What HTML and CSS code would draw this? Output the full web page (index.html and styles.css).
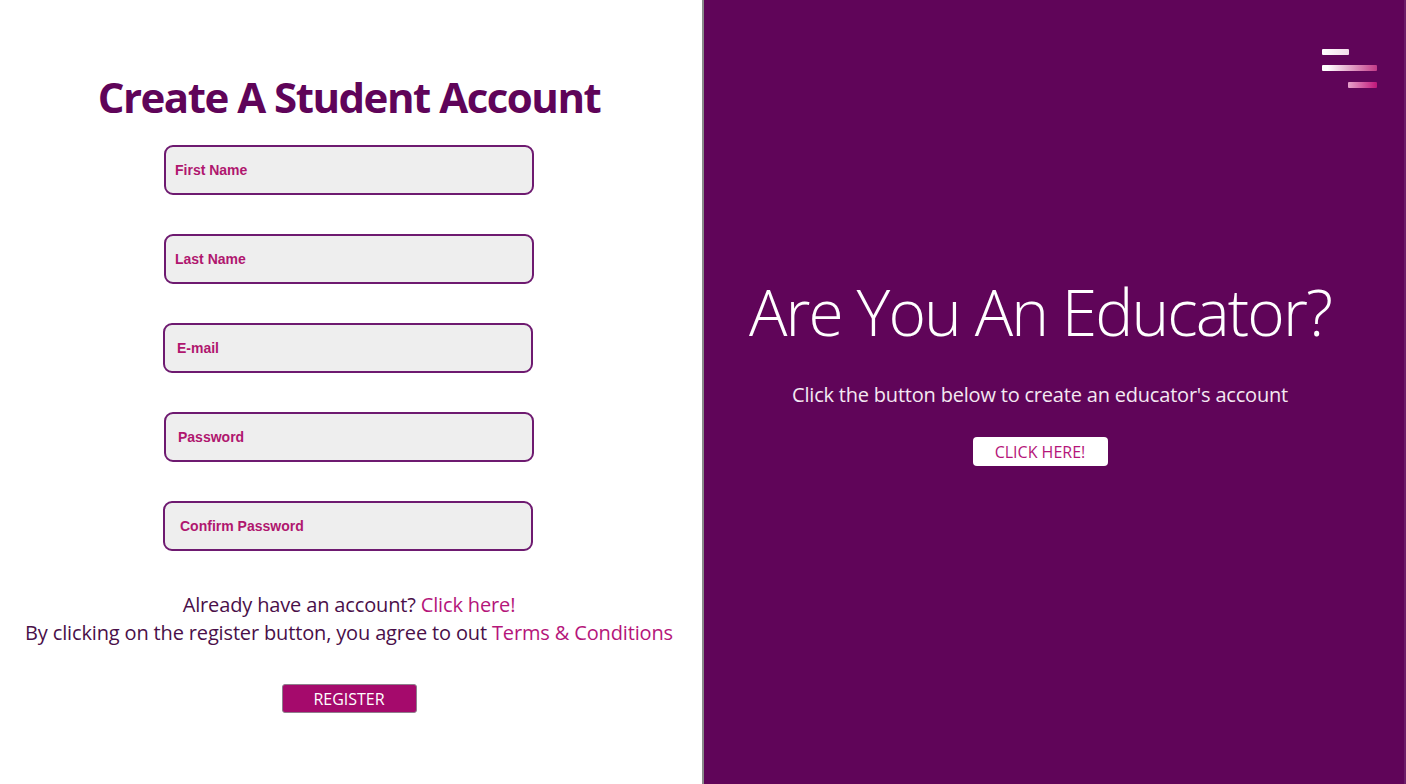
FILE: index.html
```html
<!DOCTYPE html>
<html lang="en">
<head>
<meta charset="utf-8">
<title>Create A Student Account</title>
<link rel="stylesheet" href="styles.css">
</head>
<body>
<div class="page">
  <section class="left">
    <h1 class="title">Create A Student Account</h1>
    <form class="form">
      <div class="field pad-a"><span class="ph">First Name</span></div>
      <div class="field pad-a"><span class="ph">Last Name</span></div>
      <div class="field pad-b shift"><span class="ph">E-mail</span></div>
      <div class="field pad-b"><span class="ph">Password</span></div>
      <div class="field pad-c shift"><span class="ph">Confirm Password</span></div>
    </form>
    <p class="note">Already have an account? <a class="link" href="#">Click here!</a><br>By clicking on the register button, you agree to out <a class="link" href="#">Terms &amp; Conditions</a></p>
    <button class="register" type="button">REGISTER</button>
  </section>
  <div class="divider"></div>
  <section class="right">
    <div class="menu">
      <span class="bar bar1"></span>
      <span class="bar bar2"></span>
      <span class="bar bar3"></span>
    </div>
    <h2 class="edu-title">Are You An Educator?</h2>
    <p class="edu-text">Click the button below to create an educator's account</p>
    <button class="click" type="button">CLICK HERE!</button>
  </section>
</div>
</body>
</html>
```

FILE: styles.css
```css
* { box-sizing: border-box; }
html, body { margin: 0; padding: 0; }
body {
  width: 1406px;
  height: 784px;
  overflow: hidden;
  font-family: "Open Sans", "Noto Sans", sans-serif;
  background: #ffffff;
}
.page {
  display: flex;
  height: 784px;
}
.left {
  width: 702px;
  display: flex;
  flex-direction: column;
  align-items: center;
  padding-top: 69px;
  padding-right: 4px;
}
.title {
  margin: 0;
  font-size: 42px;
  line-height: 56px;
  font-weight: 700;
  color: #5f0459;
  letter-spacing: -1.5px;
}
.form {
  margin-top: 20px;
  display: flex;
  flex-direction: column;
  gap: 39px;
}
.field {
  width: 370px;
  height: 50px;
  border: 2px solid #6e1a70;
  border-radius: 9px;
  background: #eeeeee;
  display: flex;
  align-items: center;
  padding-left: 9px;
}
.field.pad-b { padding-left: 12px; }
.field.pad-c { padding-left: 15px; }
.field.shift { margin-left: -1px; }
.ph {
  font-family: "Liberation Sans", Arial, sans-serif;
  font-weight: 700;
  font-size: 14px;
  color: #b0176f;
}
.note {
  margin: 40px 0 0;
  text-align: center;
  font-size: 20px;
  line-height: 28px;
  color: #4a0f49;
  letter-spacing: -0.15px;
}
.link {
  color: #b5157a;
  text-decoration: none;
}
.register {
  margin-top: 37px;
  width: 135px;
  height: 29px;
  background: #a50a6c;
  border: 1px solid #8e7f8c;
  border-radius: 3px;
  color: #ffffff;
  font-family: "Open Sans", sans-serif;
  font-size: 16px;
  padding: 0;
}
.divider {
  width: 2px;
  background: #8a8a8a;
}
.right {
  position: relative;
  flex: 1;
  background: #600559;
  border-right: 2px solid #6d1d69;
  display: flex;
  flex-direction: column;
  align-items: center;
  padding-top: 272px;
  padding-right: 28px;
}
.menu {
  position: absolute;
  top: 49px;
  right: 27px;
  width: 55px;
  display: flex;
  flex-direction: column;
  align-items: flex-start;
  gap: 10px;
}
.bar {
  display: block;
  height: 6px;
  border-radius: 1px;
}
.bar1 {
  width: 27px;
  background: linear-gradient(90deg, #ffffff, #f3dbea);
}
.bar2 {
  width: 55px;
  background: linear-gradient(90deg, #ffffff 10%, #c23a87);
}
.bar3 {
  width: 29px;
  align-self: flex-end;
  margin-top: 1px;
  background: linear-gradient(90deg, #e7a2cb, #c0167a);
}
.edu-title {
  margin: 0;
  font-size: 64px;
  line-height: 80px;
  font-weight: 350;
  color: #ffffff;
  letter-spacing: -1.9px;
}
.edu-text {
  margin: 29px 0 0;
  font-size: 20px;
  line-height: 28px;
  color: #f4e8f2;
  letter-spacing: -0.2px;
}
.click {
  margin-top: 28px;
  width: 135px;
  height: 29px;
  background: #ffffff;
  border: none;
  border-radius: 4px;
  color: #b5157a;
  font-family: "Open Sans", sans-serif;
  font-size: 16px;
  padding: 0;
}
```
